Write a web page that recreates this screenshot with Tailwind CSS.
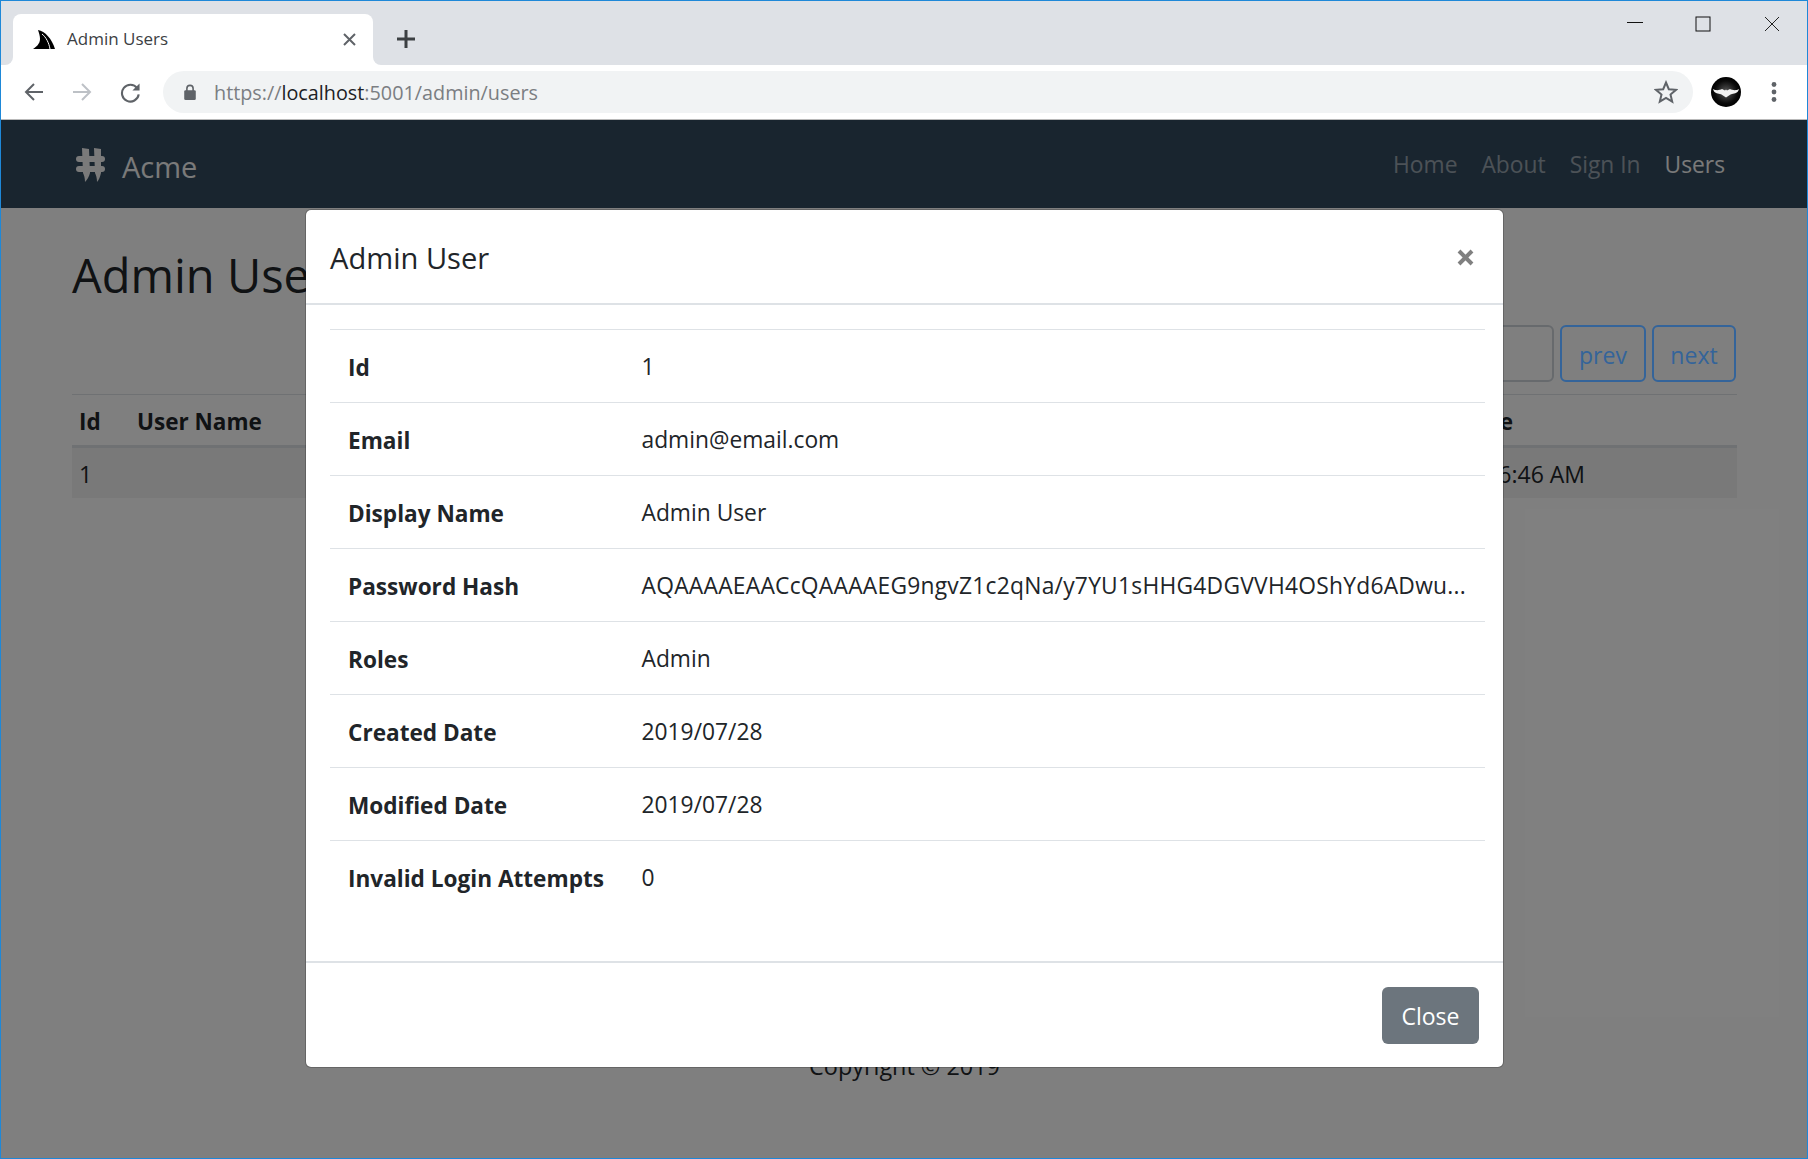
<!DOCTYPE html>
<html lang="en">
<head>
    <meta charset="UTF-8">
    <meta name="viewport" content="width=device-width, initial-scale=1.0">
    <title>Admin Users</title>
    <script src="https://cdn.jsdelivr.net/npm/@tailwindcss/browser@4"></script>
</head>
<body class="h-[1159px] overflow-hidden bg-white font-['Open_Sans','Noto_Sans',sans-serif]">
    <div class="flex h-[1159px] w-[1808px] flex-col overflow-hidden border border-[#1e88d8]">
        <!-- Tab strip -->
        <div class="flex h-[64px] shrink-0 items-end bg-[#dee1e6] pl-3">
            <div class="relative flex h-[51px] w-[360px] items-center rounded-t-lg bg-white pl-5 pr-[17px]">
                <span class="absolute -left-2 bottom-0 size-2 bg-white"><span class="block size-full rounded-br-lg bg-[#dee1e6]"></span></span>
                <span class="absolute -right-2 bottom-0 size-2 bg-white"><span class="block size-full rounded-bl-lg bg-[#dee1e6]"></span></span>
                <svg class="h-[19px] w-[22px]" viewBox="0 0 22 19"><path d="M5 0C12 1 19 9 22 19H0C3 17 7 14 7 9C7 6 6 3 5 0Z" fill="#000"/><path d="M9 4C13 7 16 13 17 19" stroke="#fff" stroke-width="1" fill="none"/></svg>
                <span class="ml-[12px] flex-1 pb-[2px] text-[17px] text-[#3c4043]">Admin Users</span>
                <svg class="size-[13px]" viewBox="0 0 13 13"><path d="M1 1L12 12M12 1L1 12" stroke="#5f6368" stroke-width="2"/></svg>
            </div>
            <svg class="mb-[17px] ml-[24px] size-[18px]" viewBox="0 0 18 18"><path d="M9 0V18M0 9H18" stroke="#3c4043" stroke-width="3"/></svg>
            <div class="ml-auto flex h-full items-start self-start pt-[15px]">
                <svg class="size-[16px]" viewBox="0 0 16 16"><path d="M0 6.5H16" stroke="#111" stroke-width="1"/></svg>
                <svg class="ml-[52px] size-[16px]" viewBox="0 0 16 16"><rect x="1" y="1" width="14" height="14" fill="none" stroke="#111" stroke-width="1"/></svg>
                <svg class="ml-[53px] mr-[27px] size-[16px]" viewBox="0 0 16 16"><path d="M1 1L15 15M15 1L1 15" stroke="#222" stroke-width="1"/></svg>
            </div>
        </div>

        <!-- Toolbar -->
        <div class="flex h-[55px] shrink-0 items-center border-b border-[#b9b9b9] bg-white">
            <svg class="ml-[23px] size-[20px]" viewBox="0 0 20 20"><path d="M19 10H2M10 2L2 10L10 18" fill="none" stroke="#5f6368" stroke-width="2"/></svg>
            <svg class="ml-[28px] size-[20px]" viewBox="0 0 20 20"><path d="M1 10H18M10 2L18 10L10 18" fill="none" stroke="#bdc1c6" stroke-width="2"/></svg>
            <svg class="ml-[28px] size-[21px]" viewBox="0 0 22 22"><path d="M18 6.5A8.8 8.8 0 1 0 19.6 13" fill="none" stroke="#5f6368" stroke-width="2.2"/><path d="M20.5 1.5V9H13Z" fill="#5f6368"/></svg>
            <div class="ml-[22px] flex h-[42px] w-[1530px] items-center rounded-full bg-[#f1f3f4] pl-[21px] pr-[15px]">
                <svg class="h-[16px] w-[12px]" viewBox="0 0 13 18"><path d="M3 8V5A3.5 3.5 0 0 1 10 5V8" fill="none" stroke="#5f6368" stroke-width="1.8"/><rect y="7" width="13" height="11" rx="1.5" fill="#5f6368"/></svg>
                <span class="ml-[18px] flex-1 pt-[2px] text-[19.8px] text-[#7b7e82]">https://<span class="text-[#202124]">localhost</span>:5001/admin/users</span>
                <svg class="size-[24px]" viewBox="0 0 24 24"><path d="M12 2.5L14.8 9.2L22 9.8L16.5 14.5L18.2 21.6L12 17.8L5.8 21.6L7.5 14.5L2 9.8L9.2 9.2Z" fill="none" stroke="#5f6368" stroke-width="2"/></svg>
            </div>
            <svg class="ml-[18px] size-[30px]" viewBox="0 0 30 30">
                <defs><radialGradient id="avatar-bg"><stop offset="0" stop-color="#5a5a5a"/><stop offset="0.75" stop-color="#0a0a0a"/><stop offset="1" stop-color="#000"/></radialGradient></defs>
                <circle cx="15" cy="15" r="15" fill="url(#avatar-bg)"/>
                <path d="M2 12C5 14 9 13 11 12L14 13.5L15 12.5L16 13.5L19 12C21 13 25 14 28 12C27 16 24 16.5 21 17C19 17.5 17 19 15 20.5C13 19 11 17.5 9 17C6 16.5 3 16 2 12Z" fill="#f2f2f2"/>
            </svg>
            <svg class="ml-[30px] h-[24px] w-[6px]" viewBox="0 0 6 24"><circle cx="3" cy="4.5" r="2.4" fill="#5f6368"/><circle cx="3" cy="12" r="2.4" fill="#5f6368"/><circle cx="3" cy="19.5" r="2.4" fill="#5f6368"/></svg>
        </div>

        <!-- Page -->
        <div class="relative flex min-h-0 flex-1 flex-col bg-white text-[#212529]">
            <nav class="flex h-[88px] shrink-0 items-center bg-[#324a5e] pl-[75px] pr-[82px]">
                <svg class="mt-[2px] h-[34px] w-[29px]" viewBox="0 0 29 34" fill="#f4f4f4">
                    <rect y="8" width="29" height="6" rx="3"/><rect y="18" width="29" height="6" rx="3"/>
                    <path d="M6 0L13 1L14 25C13 29 11 32 9 34C9 30 8 27 7 25Z"/>
                    <path d="M18 0L25 1L25 25C24 29 23 32 21 34C21 30 20 27 19 25Z"/>
                </svg>
                <span class="ml-[17px] pt-[6px] text-[29px] text-[#f4f4f4]">Acme</span>
                <div class="ml-auto flex gap-[24px] pt-[2px] text-[22.8px] text-white/50">
                    <span>Home</span><span>About</span><span>Sign In</span><span class="text-[#f4f4f4]">Users</span>
                </div>
            </nav>
            <main class="flex flex-1 flex-col pl-[71px] pr-[70px]">
                <h1 class="mt-[42px] text-[47px] leading-[50px]">Admin Users</h1>
                <div class="mt-[25px] flex h-[57px] justify-end gap-[6px] pr-[1px]">
                    <span class="w-[200px] rounded-md border-2 border-[#ced4da]"></span>
                    <span class="relative z-10 flex w-[86px] items-center justify-center rounded-md border-2 border-[#34649a] pt-1 text-[23px] text-[#34649a]">prev</span>
                    <span class="relative z-10 flex w-[84px] items-center justify-center rounded-md border-2 border-[#34649a] pt-1 text-[23px] text-[#34649a]">next</span>
                </div>
                <div class="mt-[12px] flex h-[54px] items-center border-t border-b-[3px] border-t-[#dee2e6] border-b-[#dee2e6] pl-[7px] pt-[4px] text-[22.5px] font-bold">
                    <span class="w-[58px]">Id</span><span>User Name</span><span class="ml-auto mr-[224px]">Modified Date</span>
                </div>
                <div class="flex h-[50px] items-center bg-black/5 pl-[7px] pt-[2px] text-[23px]">
                    <span>1</span><span class="ml-auto mr-[152px]">7/28/2019 6:46 AM</span>
                </div>
                <footer class="mt-[551px] text-center text-[23.4px]">Copyright © 2019</footer>
            </main>

            <!-- Modal backdrop -->
            <div class="absolute inset-0 bg-black/50"></div>

            <!-- Modal -->
            <div class="absolute left-[304px] top-[89px] z-20 flex h-[859px] w-[1199px] flex-col rounded-md border border-black/20 bg-white bg-clip-padding">
                <div class="flex h-[95px] shrink-0 items-center justify-between border-b-2 border-[#dee2e6] pl-[24px] pr-[29px] pt-[4px]">
                    <h5 class="text-[29.1px]">Admin User</h5>
                    <svg class="-mt-[2px] size-[17px]" viewBox="0 0 17 17"><path d="M2 2L15 15M15 2L2 15" stroke="#808080" stroke-width="4"/></svg>
                </div>
                <div class="flex-1 pl-[24px] pr-[18px] pt-[24px] text-[22.8px] text-[#212529]">
                    <div class="flex h-[73px] items-center border-t border-[#dee2e6]"><b class="ml-[18px] w-[293.5px] pt-[4px] text-[22.6px]">Id</b><span class="pt-[3px]">1</span></div>
                    <div class="flex h-[73px] items-center border-t border-[#dee2e6]"><b class="ml-[18px] w-[293.5px] pt-[4px] text-[22.6px]">Email</b><span class="pt-[3px]">admin@email.com</span></div>
                    <div class="flex h-[73px] items-center border-t border-[#dee2e6]"><b class="ml-[18px] w-[293.5px] pt-[4px] text-[22.6px]">Display Name</b><span class="pt-[3px]">Admin User</span></div>
                    <div class="flex h-[73px] items-center border-t border-[#dee2e6]"><b class="ml-[18px] w-[293.5px] pt-[4px] text-[22.6px]">Password Hash</b><span class="pt-[3px] tracking-[0.25px]">AQAAAAEAACcQAAAAEG9ngvZ1c2qNa/y7YU1sHHG4DGVVH4OShYd6ADwu...</span></div>
                    <div class="flex h-[73px] items-center border-t border-[#dee2e6]"><b class="ml-[18px] w-[293.5px] pt-[4px] text-[22.6px]">Roles</b><span class="pt-[3px]">Admin</span></div>
                    <div class="flex h-[73px] items-center border-t border-[#dee2e6]"><b class="ml-[18px] w-[293.5px] pt-[4px] text-[22.6px]">Created Date</b><span class="pt-[3px]">2019/07/28</span></div>
                    <div class="flex h-[73px] items-center border-t border-[#dee2e6]"><b class="ml-[18px] w-[293.5px] pt-[4px] text-[22.6px]">Modified Date</b><span class="pt-[3px]">2019/07/28</span></div>
                    <div class="flex h-[73px] items-center border-t border-[#dee2e6]"><b class="ml-[18px] w-[293.5px] pt-[4px] text-[22.6px]">Invalid Login Attempts</b><span class="pt-[3px]">0</span></div>
                </div>
                <div class="flex h-[106px] shrink-0 items-center justify-end border-t-2 border-[#dee2e6] pr-[24px]">
                    <span class="flex h-[57px] w-[97px] items-center justify-center rounded-md bg-[#6c757d] pt-[2px] text-[23px] text-white">Close</span>
                </div>
            </div>
        </div>
    </div>
</body>
</html>
